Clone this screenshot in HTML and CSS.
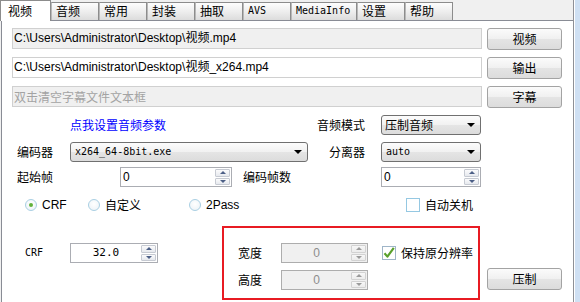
FILE: index.html
```html
<!DOCTYPE html>
<html lang="zh-CN">
<head>
<meta charset="utf-8">
<title>视频压制</title>
<link rel="stylesheet" href="styles.css">
</head>
<body>
<div class="window">
  <div class="tabctl">
    <div class="tabs">
      <div class="tab active">视频</div>
      <div class="tab">音频</div>
      <div class="tab">常用</div>
      <div class="tab">封装</div>
      <div class="tab">抽取</div>
      <div class="tab mono">AVS</div>
      <div class="tab mono wide">MediaInfo</div>
      <div class="tab">设置</div>
      <div class="tab">帮助</div>
    </div>
    <div class="panel">
      <div class="file-row">
        <div class="textbox ro">C:\Users\Administrator\Desktop\视频.mp4</div>
        <button class="btn">视频</button>
      </div>
      <div class="file-row">
        <div class="textbox">C:\Users\Administrator\Desktop\视频_x264.mp4</div>
        <button class="btn">输出</button>
      </div>
      <div class="file-row">
        <div class="textbox ro placeholder">双击清空字幕文件文本框</div>
        <button class="btn">字幕</button>
      </div>

      <div class="ctl-row">
        <div class="left">
          <a class="link">点我设置音频参数</a>
          <span class="lbl push">音频模式</span>
        </div>
        <div class="combo w100"><span class="ctext">压制音频</span><i class="drop"></i></div>
      </div>

      <div class="ctl-row r5">
        <div class="left">
          <span class="lbl first">编码器</span>
          <div class="combo w238"><span class="ctext mono">x264_64-8bit.exe</span><i class="drop"></i></div>
          <span class="lbl push">分离器</span>
        </div>
        <div class="combo w100"><span class="ctext mono">auto</span><i class="drop"></i></div>
      </div>

      <div class="ctl-row r6">
        <div class="left">
          <span class="lbl first wide">起始帧</span>
          <div class="spin w112"><span class="val">0</span><span class="arrows"><b><i class="up"></i></b><b><i class="dn"></i></b></span></div>
          <span class="lbl gap11">编码帧数</span>
        </div>
        <div class="spin w100"><span class="val">0</span><span class="arrows"><b><i class="up"></i></b><b><i class="dn"></i></b></span></div>
      </div>

      <div class="radio-row">
        <label class="ritem i1"><span class="radio on"></span><span class="rtext latin">CRF</span></label>
        <label class="ritem i2"><span class="radio"></span><span class="rtext">自定义</span></label>
        <label class="ritem i3"><span class="radio"></span><span class="rtext latin">2Pass</span></label>
        <label class="ritem"><span class="check"></span><span class="rtext">自动关机</span></label>
      </div>

      <div class="bottom">
        <div class="crf-block">
          <span class="lbl mono crf-lbl">CRF</span>
          <div class="spin w88"><span class="val center mono">32.0</span><span class="arrows"><b><i class="up"></i></b><b><i class="dn"></i></b></span></div>
        </div>
        <div class="redbox">
          <div class="res-row">
            <span class="lbl res-lbl">宽度</span>
            <div class="spin w87 disabled"><span class="val center">0</span><span class="arrows"><b><i class="up"></i></b><b><i class="dn"></i></b></span></div>
            <label class="ritem keep"><span class="check checked"><svg width="14" height="14" viewBox="0 0 14 14"><path d="M2.5 7.2 L5.4 10.6 L11.8 1.8" fill="none" stroke="#5aa02c" stroke-width="2.2" stroke-linejoin="round"/></svg></span><span class="rtext">保持原分辨率</span></label>
          </div>
          <div class="res-row">
            <span class="lbl res-lbl">高度</span>
            <div class="spin w87 disabled"><span class="val center">0</span><span class="arrows"><b><i class="up"></i></b><b><i class="dn"></i></b></span></div>
          </div>
        </div>
        <button class="btn go">压制</button>
      </div>
    </div>
  </div>
  <div class="strip"></div>
</div>
</body>
</html>
```
FILE: styles.css
```css
* { box-sizing: border-box; }
html, body { margin: 0; padding: 0; }
body {
  width: 580px;
  height: 302px;
  overflow: hidden;
  background: #f0f0f0;
  font-family: "Noto Sans CJK SC", "Liberation Sans", sans-serif;
  font-size: 12px;
  color: #000;
}
.window { display: flex; height: 302px; }
.tabctl { width: 573px; display: flex; flex-direction: column; }
.strip {
  width: 7px;
  border-left: 1px solid #8e9096;
  background: linear-gradient(to right, #ffffff 1px, #cfe0f3 1px);
}

/* tabs */
.tabs { display: flex; align-items: flex-end; height: 20px; }
.tab {
  width: 48px;
  height: 18px;
  border: 1px solid #8c8c8c;
  border-bottom: none;
  border-left-color: #b8b8b8;
  background: linear-gradient(#fdfdfd, #eeeeee 50%, #dcdcdc);
  padding-left: 4px;
  line-height: 16px;
  font-size: 12px;
  white-space: nowrap;
}
.tab.mono { font-family: "DejaVu Sans Mono", monospace; font-size: 10px; }
.tab.wide { width: 66px; }
.tab.active {
  width: 51px;
  height: 21px;
  margin-bottom: -1px;
  position: relative;
  z-index: 1;
  background: #fff;
  border-color: #8c8c8c;
  padding-left: 7px;
  line-height: 20px;
}

/* panel */
.panel {
  flex: 1;
  margin-left: 1px;
  background: #fff;
  border-top: 1px solid #898c95;
  border-left: 1px solid #898c95;
  padding: 7px 0 0 10px;
}

.file-row { display: flex; height: 22px; margin-bottom: 7px; }
.textbox {
  width: 470px;
  height: 21px;
  margin-right: 5px;
  border: 1px solid #d0d0d0;
  background: #fff;
  padding-left: 1px;
  line-height: 19px;
  font-family: "Liberation Sans", "Noto Sans CJK SC", sans-serif;
  font-size: 12px;
  white-space: nowrap;
  overflow: hidden;
}
.textbox.ro { background: #f0f0f0; }
.textbox.placeholder { color: #a3a3a3; font-family: "Noto Sans CJK SC", sans-serif; }

.btn {
  width: 75px;
  height: 22px;
  padding: 0;
  border: 1px solid #a3a3a3;
  border-radius: 3px;
  background: linear-gradient(#fbfbfb, #f0f0f0 50%, #e4e4e4 51%, #dcdcdc);
  font-family: "Noto Sans CJK SC", sans-serif;
  font-size: 12px;
  line-height: 20px;
  color: #000;
}

.mono { font-family: "DejaVu Sans Mono", monospace; font-size: 10px; }

.ctl-row { display: flex; align-items: center; height: 20px; margin-bottom: 7px; }
.ctl-row.r5 { margin-bottom: 5px; }
.ctl-row.r6 { margin-bottom: 11px; }
.left { width: 369px; display: flex; align-items: center; height: 20px; }
.link { margin-left: 58px; color: #0000ff; line-height: 16px; }
.lbl { line-height: 16px; white-space: nowrap; }
.lbl.push { margin-left: auto; margin-right: 16px; }
.lbl.first { width: 58px; padding-left: 5px; }
.lbl.first.wide { width: 108px; }
.lbl.gap11 { margin-left: 11px; }

.combo {
  display: flex;
  align-items: center;
  height: 20px;
  border: 1px solid #707070;
  border-radius: 3px;
  background: linear-gradient(#fcfcfc, #f1f1f1 50%, #e5e5e5 51%, #dcdcdc);
  padding-left: 3px;
}
.combo .ctext { line-height: 16px; }
.combo .ctext.mono { padding-left: 1px; }
.drop {
  margin-left: auto;
  margin-right: 5px;
  width: 0;
  height: 0;
  border-left: 4px solid transparent;
  border-right: 4px solid transparent;
  border-top: 4px solid #000;
}
.w100 { width: 100px; }
.w238 { width: 238px; }
.w112 { width: 112px; }
.w88 { width: 88px; }
.w87 { width: 87px; }

.spin {
  display: flex;
  height: 20px;
  border: 1px solid #abadb3;
  background: #fff;
}
.spin .val {
  flex: 1;
  padding-left: 2px;
  line-height: 18px;
  font-family: "Liberation Sans", sans-serif;
  font-size: 12px;
}
.spin .val.center { text-align: center; padding-left: 0; }
.spin .val.mono { font-family: "DejaVu Sans Mono", monospace; font-size: 11px; }
.spin .arrows { width: 16px; display: flex; flex-direction: column; gap: 1px; padding: 1px 1px 1px 0; }
.spin .arrows b {
  flex: 1;
  display: flex;
  align-items: center;
  justify-content: center;
  border: 1px solid #c6cad2;
  border-radius: 1px;
  background: linear-gradient(#fbfbfc, #e6e9ee);
}
.up, .dn { width: 0; height: 0; border-left: 3px solid transparent; border-right: 3px solid transparent; }
.up { border-bottom: 3px solid #4c5f86; }
.dn { border-top: 3px solid #4c5f86; }
.spin.disabled { background: #f0f0f0; border-color: #adadad; }
.spin.disabled .val { color: #8d8d8d; }
.spin.disabled .arrows b { background: linear-gradient(#f7f7f7, #ececec); border-color: #d2d2d2; }
.spin.disabled .up { border-bottom-color: #9a9a9a; }
.spin.disabled .dn { border-top-color: #9a9a9a; }

.radio-row { display: flex; align-items: center; height: 14px; padding-left: 13px; margin-bottom: 14px; }
.ritem { display: flex; align-items: center; }
.ritem.i1 { width: 63px; }
.ritem.i2 { width: 101px; }
.ritem.i3 { width: 217px; }
.radio {
  position: relative;
  width: 12px;
  height: 12px;
  border-radius: 50%;
  border: 1px solid #a9cfe3;
  background: radial-gradient(circle at 50% 40%, #ffffff, #eaf1f6);
}
.radio.on::after {
  content: "";
  position: absolute;
  left: 3px;
  top: 3px;
  width: 4px;
  height: 4px;
  border-radius: 50%;
  background: #62b13c;
}
.rtext { margin-left: 5px; line-height: 16px; white-space: nowrap; }
.rtext.latin { font-family: "Liberation Sans", sans-serif; font-size: 12px; }
.check {
  width: 14px;
  height: 14px;
  border: 1px solid #95c8e2;
  background: #fff;
}
.check.checked { border-color: #9fb5c8; }
.check svg { display: block; margin: -1px 0 0 -1px; }

.bottom { display: flex; align-items: flex-start; }
.crf-block { width: 210px; display: flex; align-items: center; padding: 17px 0 0 13px; }
.crf-lbl { width: 45px; }
.redbox {
  width: 258px;
  height: 74px;
  border: 2px solid #e81b23;
  padding: 15px 0 0 14px;
}
.res-row { display: flex; align-items: center; height: 20px; margin-bottom: 7px; }
.res-lbl { width: 43px; }
.ritem.keep { margin-left: 14px; }
.btn.go { margin: 42px 0 0 7px; }
```
